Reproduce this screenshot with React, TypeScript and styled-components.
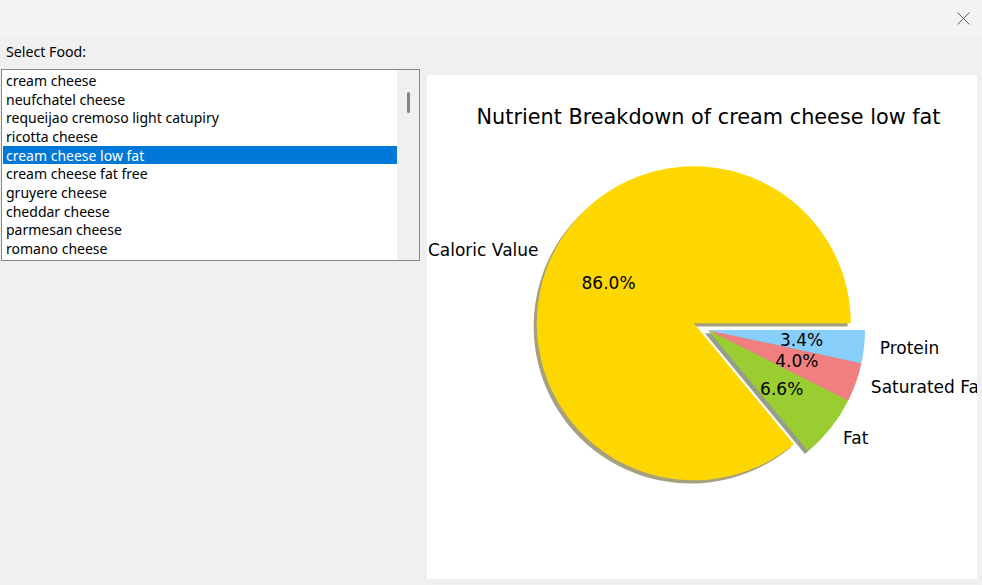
import React from 'react';
import styled, { createGlobalStyle } from 'styled-components';

const GlobalStyle = createGlobalStyle`
  html, body { margin: 0; padding: 0; background: #f0f0f0; }
  body { font-family: "Noto Sans", "Segoe UI", sans-serif; }
`;

const Window = styled.div`
  width: 982px;
  height: 585px;
  display: flex;
  flex-direction: column;
  background: #f0f0f0;
  overflow: hidden;
`;

const TitleBar = styled.div`
  height: 36px;
  flex: none;
  background: #f3f3f3;
  display: flex;
  justify-content: flex-end;
  align-items: center;
`;

const CloseButton = styled.button`
  width: 38px;
  height: 36px;
  border: 0;
  padding: 0;
  background: transparent;
  display: flex;
  align-items: center;
  justify-content: center;
  color: #5a5a5a;
`;

const Content = styled.div`
  flex: 1;
  display: flex;
  align-items: flex-start;
`;

const LeftPane = styled.div`
  width: 419px;
  margin-left: 1px;
  display: flex;
  flex-direction: column;
`;

const FieldLabel = styled.div`
  height: 33px;
  box-sizing: border-box;
  padding: 0 0 3px 5px;
  display: flex;
  align-items: center;
  font-size: 14.2px;
  color: #000;
`;

const ListBox = styled.div`
  height: 192px;
  box-sizing: border-box;
  border: 1px solid #828790;
  background: #fff;
  display: flex;
`;

const Items = styled.ul`
  flex: 1;
  margin: 0;
  padding: 1px 0 0 1px;
  list-style: none;
  overflow: hidden;
`;

const Item = styled.li<{ $selected?: boolean }>`
  height: 18.67px;
  line-height: 19.5px;
  padding-left: 3px;
  font-size: 14px;
  white-space: nowrap;
  overflow: hidden;
  background: ${(p) => (p.$selected ? '#0078d7' : 'transparent')};
  color: ${(p) => (p.$selected ? '#ffffff' : '#000000')};
`;

const ScrollTrack = styled.div`
  width: 22px;
  flex: none;
  background: #f0f0f0;
  display: flex;
  flex-direction: column;
  align-items: center;
  padding-top: 22px;
  box-sizing: border-box;
`;

const ScrollThumb = styled.div`
  width: 3px;
  height: 21px;
  border-radius: 2px;
  background: #858585;
`;

const ChartCanvas = styled.div`
  margin: 39px 0 0 7px;
  width: 550px;
  height: 504px;
  background: #ffffff;
`;

const ChartSvg = styled.svg`
  display: block;
  font-family: "DejaVu Sans", sans-serif;
`;

const foods = [
  'cream cheese',
  'neufchatel cheese',
  'requeijao cremoso light catupiry',
  'ricotta cheese',
  'cream cheese low fat',
  'cream cheese fat free',
  'gruyere cheese',
  'cheddar cheese',
  'parmesan cheese',
  'romano cheese',
];

const slices = [
  { label: 'Caloric Value', pct: 86.0, color: '#ffd700', explode: 0.1 },
  { label: 'Fat', pct: 6.6, color: '#9acd32', explode: 0 },
  { label: 'Saturated Fat', pct: 4.0, color: '#f08080', explode: 0 },
  { label: 'Protein', pct: 3.4, color: '#87cefa', explode: 0 },
];

const R = 157;
const CX = 281;
const CY = 255;

const rad = (d: number) => (d * Math.PI) / 180;
const pt = (cx: number, cy: number, r: number, d: number): [number, number] => [
  cx + r * Math.cos(rad(d)),
  cy - r * Math.sin(rad(d)),
];

const wedgePath = (cx: number, cy: number, a1: number, a2: number) => {
  const [x1, y1] = pt(cx, cy, R, a1);
  const [x2, y2] = pt(cx, cy, R, a2);
  const large = a2 - a1 > 180 ? 1 : 0;
  return `M ${cx} ${cy} L ${x1} ${y1} A ${R} ${R} 0 ${large} 0 ${x2} ${y2} Z`;
};

const shade = (hex: string) => {
  const n = parseInt(hex.slice(1), 16);
  const r = Math.round(((n >> 16) & 255) * 0.3);
  const g = Math.round(((n >> 8) & 255) * 0.3);
  const b = Math.round((n & 255) * 0.3);
  return `rgb(${r},${g},${b})`;
};

const PieChart: React.FC = () => {
  let cum = 0;
  const geo = slices.map((s) => {
    const a1 = (cum / 100) * 360;
    cum += s.pct;
    const a2 = (cum / 100) * 360;
    const mid = (a1 + a2) / 2;
    const [cx, cy] = pt(CX, CY, s.explode * R, mid);
    return { ...s, a1, a2, mid, cx, cy };
  });
  const off = 0.02 * R;
  return (
    <ChartSvg width={550} height={504} viewBox="0 0 550 504">
      <text x={281.5} y={42} textAnchor="middle" dominantBaseline="central" fontSize={20.8} fill="#000">
        Nutrient Breakdown of cream cheese low fat
      </text>
      {geo.map((g) => (
        <path
          key={`s-${g.label}`}
          d={wedgePath(g.cx - off, g.cy + off, g.a1, g.a2)}
          fill={shade(g.color)}
          opacity={0.5}
        />
      ))}
      {geo.map((g) => (
        <path key={`w-${g.label}`} d={wedgePath(g.cx, g.cy, g.a1, g.a2)} fill={g.color} />
      ))}
      {geo.map((g) => {
        const [lx, ly] = pt(g.cx, g.cy, 1.1 * R, g.mid);
        const [px, py] = pt(g.cx, g.cy, 0.6 * R, g.mid);
        const right = Math.cos(rad(g.mid)) > 0;
        return (
          <g key={`t-${g.label}`} fontSize={17} fill="#000">
            <text x={right ? lx : lx + 1} y={ly} textAnchor={right ? 'start' : 'end'} dominantBaseline="central">
              {g.label}
            </text>
            <text x={px} y={py} textAnchor="middle" dominantBaseline="central">
              {g.pct.toFixed(1)}%
            </text>
          </g>
        );
      })}
    </ChartSvg>
  );
};

export default function App() {
  return (
    <>
      <GlobalStyle />
      <Window>
        <TitleBar>
          <CloseButton aria-label="Close">
            <svg width="13" height="13" viewBox="0 0 13 13">
              <path d="M0.5 0.5 L12.5 12.5 M12.5 0.5 L0.5 12.5" stroke="currentColor" strokeWidth="1" fill="none" />
            </svg>
          </CloseButton>
        </TitleBar>
        <Content>
          <LeftPane>
            <FieldLabel>Select Food:</FieldLabel>
            <ListBox>
              <Items>
                {foods.map((f) => (
                  <Item key={f} $selected={f === 'cream cheese low fat'}>
                    {f}
                  </Item>
                ))}
              </Items>
              <ScrollTrack>
                <ScrollThumb />
              </ScrollTrack>
            </ListBox>
          </LeftPane>
          <ChartCanvas>
            <PieChart />
          </ChartCanvas>
        </Content>
      </Window>
    </>
  );
}
